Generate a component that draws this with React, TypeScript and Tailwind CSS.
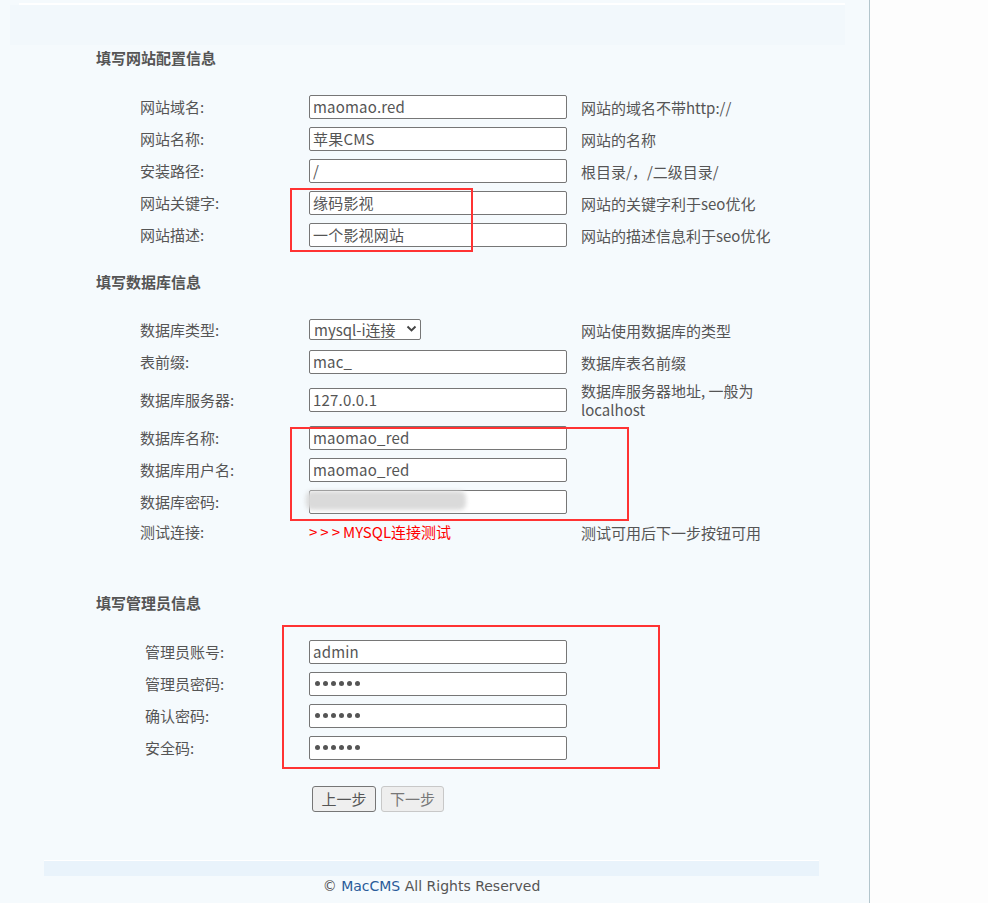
import React from 'react';

const font = { fontFamily: '"Noto Sans CJK SC", "Noto Sans", sans-serif' };

type RowProps = {
    label: string;
    children: React.ReactNode;
    help?: React.ReactNode;
    h?: string;
    indent?: string;
};

function Row({ label, children, help, h = 'h-[32px]', indent = 'pl-[44px]' }: RowProps) {
    return (
        <div className={`flex items-center ${h}`}>
            <div className={`w-[213px] shrink-0 ${indent} text-[15px] text-[#555]`}>{label}</div>
            <div className="w-[258px] shrink-0 relative -mt-[1px]">{children}</div>
            {help && <div className="ml-[14px] w-[200px] text-[15px] leading-[19px] text-[#555]">{help}</div>}
        </div>
    );
}

function TextInput({ value }: { value: string }) {
    return (
        <input
            type="text"
            defaultValue={value}
            readOnly
            style={font}
            className="block w-[258px] h-[24px] bg-white border border-[#767676] rounded-[2px] px-[3px] text-[15px] text-[#555] tracking-[0.2px] outline-none"
        />
    );
}

// password field with six dots
function PasswordInput() {
    return (
        <div className="w-[258px] h-[24px] bg-white border border-[#767676] rounded-[2px] pl-[5px] flex items-center gap-[3px]">
            {[0, 1, 2, 3, 4, 5].map((i) => (
                <span key={i} className="w-[5px] h-[5px] rounded-full bg-[#555]" />
            ))}
        </div>
    );
}

function Heading({ children, className = '' }: { children: React.ReactNode; className?: string }) {
    return <div className={`h-[20px] leading-[20px] text-[15px] font-bold text-[#555] ${className}`}>{children}</div>;
}

export default function App() {
    return (
        <div className="flex min-h-[903px] w-full" style={font}>
            <div className="relative w-[870px] shrink-0 bg-[#f5fafd] border-r border-[#b3c5cc] flex flex-col">
                {/* top decoration */}
                <div className="mt-[3px] ml-[19px] w-[826px] h-[2px] bg-white" />
                <div className="ml-[10px] w-[835px] h-[40px] bg-[#f2f8fc]" />

                <div className="pl-[96px]">
                    {/* Site config */}
                    <Heading className="mt-[3px]">填写网站配置信息</Heading>
                    <div className="mt-[23px]">
                        <Row label="网站域名:" help="网站的域名不带http://">
                            <TextInput value="maomao.red" />
                        </Row>
                        <Row label="网站名称:" help="网站的名称">
                            <TextInput value="苹果CMS" />
                        </Row>
                        <Row label="安装路径:" help="根目录/，/二级目录/">
                            <TextInput value="/" />
                        </Row>
                        <Row label="网站关键字:" help="网站的关键字利于seo优化">
                            <TextInput value="缘码影视" />
                        </Row>
                        <Row label="网站描述:" help="网站的描述信息利于seo优化">
                            <TextInput value="一个影视网站" />
                        </Row>
                    </div>

                    {/* Database */}
                    <Heading className="mt-[21px]">填写数据库信息</Heading>
                    <div className="mt-[22px]">
                        <Row label="数据库类型:" help="网站使用数据库的类型">
                            <div className="w-[112px] h-[21px] bg-white border border-[#767676] rounded-[2px] flex items-center pl-[4px] pr-[3px] text-[15px] text-[#555]">
                                <span className="flex-1 leading-[19px]">mysql-i连接</span>
                                <svg width="11" height="8" viewBox="0 0 11 8" fill="none" className="-mt-[1px]">
                                    <path d="M1.5 1.5l4 4 4-4" stroke="#444" strokeWidth="1.9" />
                                </svg>
                            </div>
                        </Row>
                        <Row label="表前缀:" help="数据库表名前缀">
                            <TextInput value="mac_" />
                        </Row>
                        <Row
                            label="数据库服务器:"
                            h="h-[44px]"
                            help={
                                <>
                                    数据库服务器地址, 一般为
                                    <br />
                                    localhost
                                </>
                            }
                        >
                            <TextInput value="127.0.0.1" />
                        </Row>
                        <Row label="数据库名称:">
                            <TextInput value="maomao_red" />
                        </Row>
                        <Row label="数据库用户名:">
                            <TextInput value="maomao_red" />
                        </Row>
                        <Row label="数据库密码:">
                            <TextInput value="" />
                            <div className="absolute left-[-3px] top-[1px] w-[160px] h-[19px] rounded-[6px] bg-[#dadada] blur-[2px]" />
                        </Row>
                        <Row label="测试连接:" h="h-[28px]" help="测试可用后下一步按钮可用">
                            <span className="text-[15px] text-[#f00] cursor-pointer">
                                <span className="tracking-[3px]">&gt;&gt;&gt;</span>MYSQL连接测试
                            </span>
                        </Row>
                    </div>

                    {/* Admin */}
                    <Heading className="mt-[47px]">填写管理员信息</Heading>
                    <div className="mt-[23px]">
                        <Row label="管理员账号:" indent="pl-[49px]">
                            <TextInput value="admin" />
                        </Row>
                        <Row label="管理员密码:" indent="pl-[49px]">
                            <PasswordInput />
                        </Row>
                        <Row label="确认密码:" indent="pl-[49px]">
                            <PasswordInput />
                        </Row>
                        <Row label="安全码:" indent="pl-[49px]">
                            <PasswordInput />
                        </Row>
                    </div>

                    <div className="mt-[22px] ml-[216px] flex gap-[5px]">
                        <button className="w-[64px] h-[26px] bg-[#efefef] border border-[#767676] rounded-[3px] text-[15px] text-[#555]">
                            上一步
                        </button>
                        <button
                            disabled
                            className="w-[63px] h-[26px] bg-[#eeeeee] border border-[#c8c8c8] rounded-[3px] text-[15px] text-[#777]"
                        >
                            下一步
                        </button>
                    </div>
                </div>

                {/* Footer */}
                <div className="mt-[48px] ml-[44px] w-[775px] h-[1px] bg-white" />
                <div className="ml-[44px] w-[775px] h-[15px] bg-[#e9f3fb]" />
                <div
                    className="h-[18px] leading-[18px] mt-[1px] text-center text-[14px] text-[#555] pr-[6px]"
                    style={{ fontFamily: '"DejaVu Sans", "Liberation Sans", sans-serif' }}
                >
                    © <span className="text-[#2a5c9a]">MacCMS</span> All Rights Reserved
                </div>

                {/* red annotation boxes */}
                <div className="absolute left-[290px] top-[188px] w-[183px] h-[64px] border-2 border-[#f33]" />
                <div className="absolute left-[290px] top-[427px] w-[339px] h-[94px] border-2 border-[#f33]" />
                <div className="absolute left-[282px] top-[625px] w-[378px] h-[144px] border-2 border-[#f33]" />
            </div>
            <div className="flex-1 bg-[#fdfdfd]" />
        </div>
    );
}
